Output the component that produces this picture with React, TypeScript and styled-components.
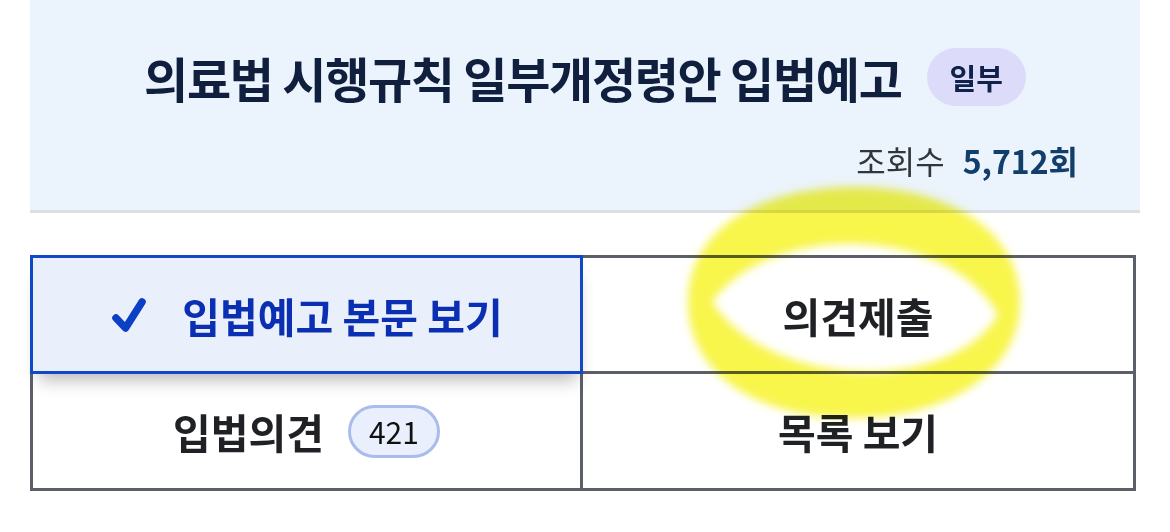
import React from "react";
import styled, { createGlobalStyle } from "styled-components";

const Global = createGlobalStyle`
  html, body { margin: 0; padding: 0; background: #ffffff; }
  body { font-family: "Noto Sans CJK KR", "Noto Sans", sans-serif; }
  * { box-sizing: border-box; }
`;

const Page = styled.div`
  position: relative;
  width: 1170px;
  height: 532px;
  padding: 0 30px;
  overflow: hidden;
`;

const Header = styled.section`
  background: #ebf3fc;
  border-bottom: 3px solid #dcdfe4;
  padding: 42px 62px 30px 62px;
  display: flex;
  flex-direction: column;
  gap: 28px;
`;

const TitleRow = styled.div`
  display: flex;
  align-items: center;
  justify-content: center;
  gap: 25px;
  height: 70px;
`;

const Title = styled.h1`
  margin: 0;
  font-size: 48px;
  line-height: 70px;
  font-weight: 700;
  color: #0f1f3d;
  letter-spacing: -1.3px;
  white-space: nowrap;
`;

const Badge = styled.span`
  flex: none;
  display: inline-flex;
  align-items: center;
  justify-content: center;
  height: 58px;
  padding: 0 23px;
  border-radius: 29px;
  background: #dcdcfa;
  color: #10214a;
  font-size: 29px;
  font-weight: 700;
  white-space: nowrap;
`;

const Views = styled.div`
  display: flex;
  justify-content: flex-end;
  align-items: center;
  gap: 18px;
  height: 40px;
  font-size: 32px;
  line-height: 40px;
  white-space: nowrap;
`;

const ViewLabel = styled.span`
  color: #333639;
  font-weight: 400;
`;

const ViewCount = styled.span`
  color: #123e6b;
  font-weight: 700;
`;

const Table = styled.div`
  margin: 42px 4px 0 0;
  display: grid;
  grid-template-columns: 1fr 1fr;
  grid-template-rows: 116px 114px;
  border: 3px solid #5b6068;
`;

const Cell = styled.div<{ $right?: boolean; $bottom?: boolean; $active?: boolean }>`
  position: relative;
  display: flex;
  align-items: center;
  justify-content: center;
  gap: 24px;
  font-size: 41px;
  font-weight: 700;
  white-space: nowrap;
  color: ${(p) => (p.$active ? "#0a2fb3" : "#1f2124")};
  background: ${(p) => (p.$active ? "#e9f0fc" : "#ffffff")};
  border-right: ${(p) => (p.$right ? "3px solid #5b6068" : "none")};
  border-bottom: ${(p) => (p.$bottom ? "3px solid #5b6068" : "none")};
  z-index: ${(p) => (p.$active ? 2 : 1)};
  box-shadow: ${(p) => (p.$active ? "0 12px 16px -6px rgba(0,0,0,0.28)" : "none")};

  &::after {
    content: "";
    display: ${(p) => (p.$active ? "block" : "none")};
    position: absolute;
    top: -3px;
    left: -3px;
    right: -3px;
    bottom: -3px;
    border: 3px solid #1048c8;
    pointer-events: none;
  }
`;

const Check = styled.svg`
  width: 38px;
  height: 36px;
  margin-right: 10px;
  flex: none;
`;

const Count = styled.span`
  display: inline-flex;
  align-items: center;
  justify-content: center;
  height: 53px;
  padding: 0 18px;
  border-radius: 27px;
  background: #e9effc;
  border: 3px solid #a9bceb;
  color: #111111;
  font-size: 30px;
  font-weight: 400;
`;

const Highlight = styled.svg`
  position: absolute;
  left: 0;
  top: 0;
  width: 1170px;
  height: 532px;
  pointer-events: none;
  mix-blend-mode: multiply;
  z-index: 5;
`;

export default function App() {
  return (
    <Page>
      <Global />
      <Header>
        <TitleRow>
          <Title>의료법 시행규칙 일부개정령안 입법예고</Title>
          <Badge>일부</Badge>
        </TitleRow>
        <Views>
          <ViewLabel>조회수</ViewLabel>
          <ViewCount>5,712회</ViewCount>
        </Views>
      </Header>
      <Table>
        <Cell $active $right $bottom>
          <Check viewBox="0 0 38 36">
            <path
              d="M6 21 L15.5 31 L32 5"
              fill="none"
              stroke="#0b3fc5"
              strokeWidth="7.5"
              strokeLinecap="round"
              strokeLinejoin="round"
            />
          </Check>
          입법예고 본문 보기
        </Cell>
        <Cell $bottom>의견제출</Cell>
        <Cell $right>
          입법의견
          <Count>421</Count>
        </Cell>
        <Cell>목록 보기</Cell>
      </Table>
      <Highlight viewBox="0 0 1170 532">
        <defs>
          <filter id="soft" x="-10%" y="-10%" width="120%" height="120%">
            <feGaussianBlur stdDeviation="4" />
          </filter>
        </defs>
        <path
          fillRule="evenodd"
          fill="#f8f54c"
          filter="url(#soft)"
          d="M688 302 C688 228 762 187 855 187 C948 187 1020 230 1020 302 C1020 372 948 418 852 418 C760 418 688 376 688 302 Z
             M712 302 C770 220 950 225 998 315 C950 395 770 390 712 302 Z"
        />
      </Highlight>
    </Page>
  );
}
